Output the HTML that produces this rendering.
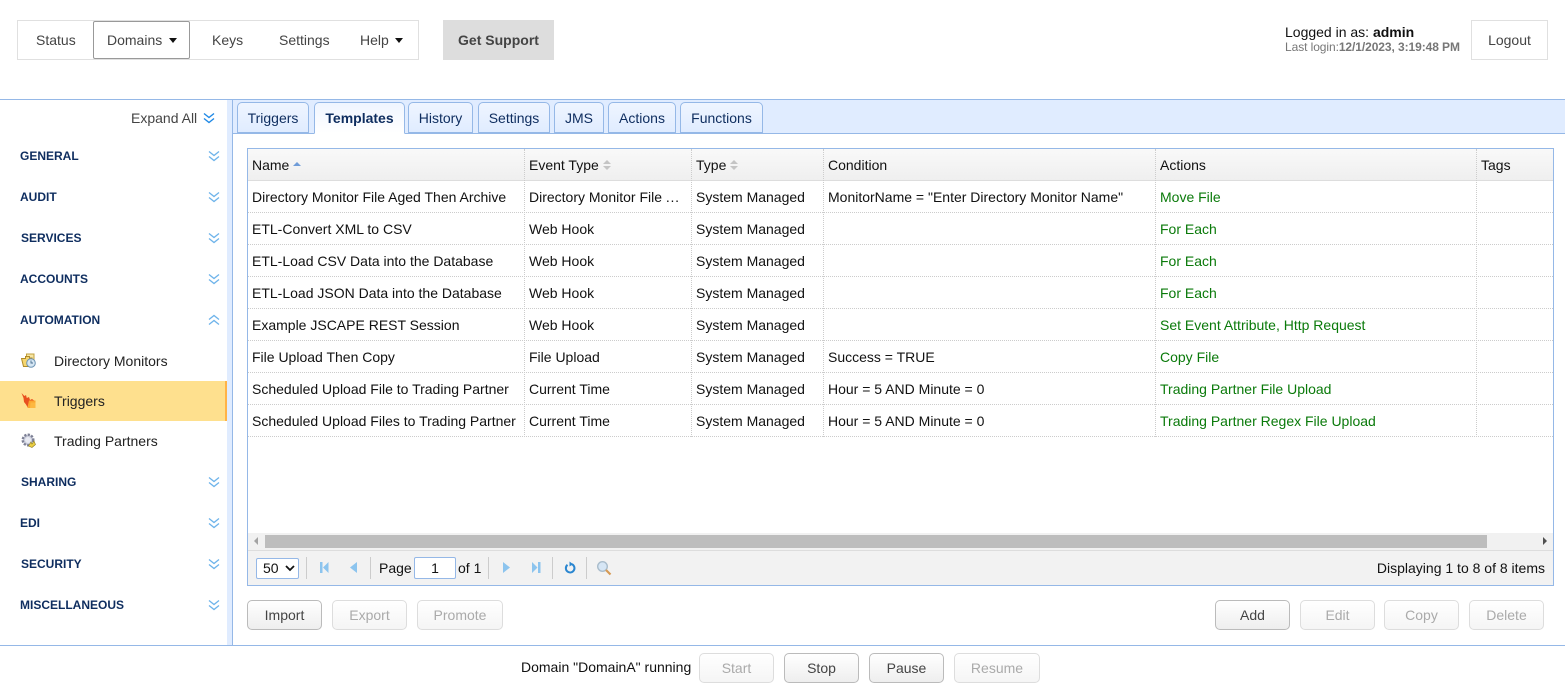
<!DOCTYPE html>
<html><head><meta charset="utf-8">
<style>
html,body{margin:0;padding:0;width:1565px;height:688px;overflow:hidden;background:#fff;font-family:"Liberation Sans",sans-serif;font-size:14px;color:#111}
.a{position:absolute;white-space:nowrap}
.t{position:absolute;white-space:nowrap;line-height:16px}
.nav{color:#444}
.tab{position:absolute;top:102px;height:31px;box-sizing:border-box;border:1px solid #95b8e7;border-bottom:1px solid #95b8e7;border-radius:5px 5px 0 0;background:linear-gradient(#eff5ff,#e0ecff);text-align:center;line-height:30px;color:#0e2d5f}
.tab.on{background:linear-gradient(#eff5ff,#fff);border-bottom:1px solid #fff;height:32px;font-weight:bold}
.sec{position:absolute;left:20px;font-size:12px;font-weight:bold;color:#0e2d5f;line-height:14px}
.chev{position:absolute;left:208px;width:12px;height:12px}
.btn{position:absolute;box-sizing:border-box;height:30px;border:1px solid #bbb;border-radius:5px;background:linear-gradient(#fff,#eee);text-align:center;line-height:29px;color:#444}
.btn.d{border-color:#ddd;color:#aaa;background:linear-gradient(#fff,#f5f5f5)}
.row{position:absolute;left:248px;width:1305px;height:32px;border-bottom:1px dotted #ccc;box-sizing:border-box}
.vs{position:absolute;width:0;border-left:1px dotted #ccc}
.g{color:#0a7a0a}
.sep{position:absolute;top:557px;height:22px;width:1px;background:#ccc}
</style></head><body>

<!-- top nav -->
<div class="a" style="left:17px;top:20px;width:402px;height:40px;box-sizing:border-box;border:1px solid #e0e0e0"></div>
<div class="a" style="left:93px;top:21px;width:97px;height:38px;box-sizing:border-box;border:1px solid #999;border-radius:2px"></div>
<div class="t nav" style="left:36px;top:32px">Status</div>
<div class="t nav" style="left:107px;top:32px">Domains</div>
<div class="a" style="left:169px;top:38px;width:0;height:0;border-left:4.5px solid transparent;border-right:4.5px solid transparent;border-top:5px solid #111"></div>
<div class="t nav" style="left:212px;top:32px">Keys</div>
<div class="t nav" style="left:279px;top:32px">Settings</div>
<div class="t nav" style="left:360px;top:32px">Help</div>
<div class="a" style="left:395px;top:38px;width:0;height:0;border-left:4.5px solid transparent;border-right:4.5px solid transparent;border-top:5px solid #111"></div>
<div class="t" style="left:443px;top:20px;width:111px;height:40px;background:#ddd;text-align:center;line-height:40px;font-weight:bold;color:#444">Get Support</div>

<div class="t" style="left:1285px;top:24px;color:#111">Logged in as: <b>admin</b></div>
<div class="t" style="left:1285px;top:39px;font-size:12px;color:#777;letter-spacing:-.08px">Last login:<b>12/1/2023, 3:19:48 PM</b></div>
<div class="a" style="left:1471px;top:20px;width:77px;height:40px;box-sizing:border-box;border:1px solid #e0e0e0;text-align:center;line-height:38px;color:#444">Logout</div>

<!-- frame lines -->
<div class="a" style="left:0;top:99px;width:1565px;height:1px;background:#95b8e7"></div>
<div class="a" style="left:227px;top:100px;width:5px;height:545px;background:#e0ecff"></div>
<div class="a" style="left:232px;top:100px;width:1px;height:545px;background:#95b8e7"></div>
<div class="a" style="left:233px;top:100px;width:1332px;height:33px;background:#e0ecff"></div>
<div class="a" style="left:233px;top:133px;width:1332px;height:1px;background:#95b8e7"></div>
<div class="a" style="left:0;top:645px;width:1565px;height:1px;background:#95b8e7"></div>

<!-- sidebar -->
<div class="t" style="left:131px;top:110px;color:#444">Expand All</div>
<svg class="a" style="left:203px;top:112px" width="12" height="12" viewBox="0 0 12 12" fill="none" stroke="#1e88e5" stroke-width="1.4"><path d="M1 1.500l5 4 5-4M1 6.500l5 4 5-4"/></svg>

<div class="sec" style="top:149px">GENERAL</div>
<div class="sec" style="top:190px">AUDIT</div>
<div class="sec" style="top:231px;left:21px">SERVICES</div>
<div class="sec" style="top:272px">ACCOUNTS</div>
<div class="sec" style="top:313px">AUTOMATION</div>
<div class="sec" style="top:475px;left:21px">SHARING</div>
<div class="sec" style="top:516px">EDI</div>
<div class="sec" style="top:557px;left:21px">SECURITY</div>
<div class="sec" style="top:598px">MISCELLANEOUS</div>

<svg class="chev" style="top:150px" viewBox="0 0 12 12" fill="none" stroke="#6db3ea" stroke-width="1.3"><path d="M1 1.500l5 4 5-4M1 6.500l5 4 5-4"/></svg>
<svg class="chev" style="top:191px" viewBox="0 0 12 12" fill="none" stroke="#6db3ea" stroke-width="1.3"><path d="M1 1.500l5 4 5-4M1 6.500l5 4 5-4"/></svg>
<svg class="chev" style="top:232px" viewBox="0 0 12 12" fill="none" stroke="#6db3ea" stroke-width="1.3"><path d="M1 1.500l5 4 5-4M1 6.500l5 4 5-4"/></svg>
<svg class="chev" style="top:273px" viewBox="0 0 12 12" fill="none" stroke="#6db3ea" stroke-width="1.3"><path d="M1 1.500l5 4 5-4M1 6.500l5 4 5-4"/></svg>
<svg class="chev" style="top:314px" viewBox="0 0 12 12" fill="none" stroke="#6db3ea" stroke-width="1.3"><path d="M1 5.500l5-4 5 4M1 10.500l5-4 5 4"/></svg>
<svg class="chev" style="top:476px" viewBox="0 0 12 12" fill="none" stroke="#6db3ea" stroke-width="1.3"><path d="M1 1.500l5 4 5-4M1 6.500l5 4 5-4"/></svg>
<svg class="chev" style="top:517px" viewBox="0 0 12 12" fill="none" stroke="#6db3ea" stroke-width="1.3"><path d="M1 1.500l5 4 5-4M1 6.500l5 4 5-4"/></svg>
<svg class="chev" style="top:558px" viewBox="0 0 12 12" fill="none" stroke="#6db3ea" stroke-width="1.3"><path d="M1 1.500l5 4 5-4M1 6.500l5 4 5-4"/></svg>
<svg class="chev" style="top:599px" viewBox="0 0 12 12" fill="none" stroke="#6db3ea" stroke-width="1.3"><path d="M1 1.500l5 4 5-4M1 6.500l5 4 5-4"/></svg>

<div class="a" style="left:0;top:381px;width:225px;height:40px;background:#fee08e"></div>
<div class="a" style="left:225px;top:381px;width:2px;height:40px;background:#ffb347"></div>
<div class="t" style="left:54px;top:353px;color:#222">Directory Monitors</div>
<div class="t" style="left:54px;top:393px;color:#222">Triggers</div>
<div class="t" style="left:54px;top:433px;color:#222">Trading Partners</div>

<svg class="a" style="left:21px;top:353px" width="15" height="15" viewBox="0 0 15 15"><path d="M5.500 3.500V1h7.500v9h-7z" fill="#f7e6a4" stroke="#c2a040" stroke-width="1"/><path d="M.5 5.500h4V3.500h4v1.500h2.500L10 13.500H2.500z" fill="#f5d670" stroke="#b08a28" stroke-width="1"/><circle cx="10" cy="10" r="4.300" fill="#d5e6f3" stroke="#6c93b3" stroke-width="1"/><path d="M10 7.500V10h2" stroke="#4a6f90" stroke-width=".9" fill="none"/></svg>
<svg class="a" style="left:21px;top:393px" width="15" height="15" viewBox="0 0 15 15"><path d="M.5 0l3 3 1.500-1 .8 3L8 4l1 3 2-1 3.500 2.500V15H7L5 11.500 3 9 2.500 5z" fill="#e8501f"/><path d="M8 7.500l6.500 0V15H6.500l.5-3z" fill="#fba62f"/><path d="M9.500 9.500h5V15H9z" fill="#fdb840"/></svg>
<svg class="a" style="left:21px;top:433px" width="15" height="15" viewBox="0 0 15 15"><circle cx="7" cy="7" r="5.300" fill="#c9ccda" stroke="#7d8095" stroke-width="2.400" stroke-dasharray="2.200 1.300"/><circle cx="7" cy="7" r="3" fill="#e9ebf3"/><path d="M7.500 13l2.500-4 1 2 2-3 1.500 3.500-3.500 3z" fill="#ecd045" stroke="#8c7a20" stroke-width=".6"/></svg>

<!-- tabs -->
<div class="tab" style="left:237px;width:72px">Triggers</div>
<div class="tab on" style="left:314px;width:91px">Templates</div>
<div class="tab" style="left:408px;width:65px">History</div>
<div class="tab" style="left:478px;width:72px">Settings</div>
<div class="tab" style="left:554px;width:50px">JMS</div>
<div class="tab" style="left:608px;width:68px">Actions</div>
<div class="tab" style="left:680px;width:83px">Functions</div>

<!-- grid -->
<div class="a" style="left:247px;top:148px;width:1307px;height:438px;box-sizing:border-box;border:1px solid #95b8e7"></div>
<div class="a" style="left:248px;top:149px;width:1305px;height:32px;box-sizing:border-box;background:linear-gradient(#f9f9f9,#efefef);border-bottom:1px solid #ddd"></div>

<div class="vs" style="left:524px;top:149px;height:288px"></div>
<div class="vs" style="left:691px;top:149px;height:288px"></div>
<div class="vs" style="left:823px;top:149px;height:288px"></div>
<div class="vs" style="left:1155px;top:149px;height:288px"></div>
<div class="vs" style="left:1476px;top:149px;height:288px"></div>

<div class="t" style="left:252px;top:157px">Name</div>
<div class="a" style="left:293px;top:162px;width:0;height:0;border:4.500px solid transparent;border-bottom:4.500px solid #6f9cd8;border-top:0"></div>
<div class="t" style="left:529px;top:157px">Event Type</div>
<div class="a" style="left:603px;top:160px;width:0;height:0;border:4.500px solid transparent;border-bottom:4.500px solid #c4c4c4;border-top:0"></div>
<div class="a" style="left:603px;top:166px;width:0;height:0;border:4.500px solid transparent;border-top:4.500px solid #c4c4c4;border-bottom:0"></div>
<div class="t" style="left:696px;top:157px">Type</div>
<div class="a" style="left:730px;top:160px;width:0;height:0;border:4.500px solid transparent;border-bottom:4.500px solid #c4c4c4;border-top:0"></div>
<div class="a" style="left:730px;top:166px;width:0;height:0;border:4.500px solid transparent;border-top:4.500px solid #c4c4c4;border-bottom:0"></div>
<div class="t" style="left:828px;top:157px">Condition</div>
<div class="t" style="left:1160px;top:157px">Actions</div>
<div class="t" style="left:1481px;top:157px">Tags</div>

<div class="row" style="top:181px"></div>
<div class="row" style="top:213px"></div>
<div class="row" style="top:245px"></div>
<div class="row" style="top:277px"></div>
<div class="row" style="top:309px"></div>
<div class="row" style="top:341px"></div>
<div class="row" style="top:373px"></div>
<div class="row" style="top:405px"></div>

<div class="t" style="left:252px;top:189px">Directory Monitor File Aged Then Archive</div>
<div class="t" style="left:529px;top:189px">Directory Monitor File <span style="letter-spacing:.7px">...</span></div>
<div class="t" style="left:696px;top:189px">System Managed</div>
<div class="t" style="left:828px;top:189px">MonitorName = "Enter Directory Monitor Name"</div>
<div class="t g" style="left:1160px;top:189px">Move File</div>

<div class="t" style="left:252px;top:221px">ETL-Convert XML to CSV</div>
<div class="t" style="left:529px;top:221px">Web Hook</div>
<div class="t" style="left:696px;top:221px">System Managed</div>
<div class="t g" style="left:1160px;top:221px">For Each</div>

<div class="t" style="left:252px;top:253px">ETL-Load CSV Data into the Database</div>
<div class="t" style="left:529px;top:253px">Web Hook</div>
<div class="t" style="left:696px;top:253px">System Managed</div>
<div class="t g" style="left:1160px;top:253px">For Each</div>

<div class="t" style="left:252px;top:285px">ETL-Load JSON Data into the Database</div>
<div class="t" style="left:529px;top:285px">Web Hook</div>
<div class="t" style="left:696px;top:285px">System Managed</div>
<div class="t g" style="left:1160px;top:285px">For Each</div>

<div class="t" style="left:252px;top:317px">Example JSCAPE REST Session</div>
<div class="t" style="left:529px;top:317px">Web Hook</div>
<div class="t" style="left:696px;top:317px">System Managed</div>
<div class="t g" style="left:1160px;top:317px">Set Event Attribute, Http Request</div>

<div class="t" style="left:252px;top:349px">File Upload Then Copy</div>
<div class="t" style="left:529px;top:349px">File Upload</div>
<div class="t" style="left:696px;top:349px">System Managed</div>
<div class="t" style="left:828px;top:349px">Success = TRUE</div>
<div class="t g" style="left:1160px;top:349px">Copy File</div>

<div class="t" style="left:252px;top:381px">Scheduled Upload File to Trading Partner</div>
<div class="t" style="left:529px;top:381px">Current Time</div>
<div class="t" style="left:696px;top:381px">System Managed</div>
<div class="t" style="left:828px;top:381px">Hour = 5 AND Minute = 0</div>
<div class="t g" style="left:1160px;top:381px">Trading Partner File Upload</div>

<div class="t" style="left:252px;top:413px">Scheduled Upload Files to Trading Partner</div>
<div class="t" style="left:529px;top:413px">Current Time</div>
<div class="t" style="left:696px;top:413px">System Managed</div>
<div class="t" style="left:828px;top:413px">Hour = 5 AND Minute = 0</div>
<div class="t g" style="left:1160px;top:413px">Trading Partner Regex File Upload</div>

<!-- scrollbar -->
<div class="a" style="left:248px;top:533px;width:1305px;height:17px;background:#f1f1f1"></div>
<div class="a" style="left:265px;top:535px;width:1222px;height:13px;background:#bdbdbd"></div>
<div class="a" style="left:254px;top:537px;width:0;height:0;border:4.500px solid transparent;border-right:4.500px solid #a3a3a3;border-left:0"></div>
<div class="a" style="left:1543px;top:537px;width:0;height:0;border:4.500px solid transparent;border-left:4.500px solid #505050;border-right:0"></div>

<!-- pager -->
<div class="a" style="left:248px;top:550px;width:1305px;height:35px;box-sizing:border-box;background:#f2f2f2;border-top:1px solid #ddd"></div>
<div class="a" style="left:256px;top:558px;width:43px;height:21px;box-sizing:border-box;border:1px solid #95b8e7;border-radius:2px;background:#fff;line-height:19px;padding-left:6px;color:#111">50</div>
<svg class="a" style="left:285px;top:565px" width="10" height="7" viewBox="0 0 10 7" fill="none" stroke="#111" stroke-width="1.800"><path d="M1 1l4 4 4-4"/></svg>
<div class="sep" style="left:306px"></div>
<div class="sep" style="left:370px"></div>
<div class="sep" style="left:488px"></div>
<div class="sep" style="left:552px"></div>
<div class="sep" style="left:586px"></div>
<svg class="a" style="left:320px;top:562px" width="9" height="11" viewBox="0 0 9 11" fill="#8cc4ee"><path d="M0 0h2.500v11H0zM8.500 0v11L3 5.500z"/></svg>
<svg class="a" style="left:350px;top:562px" width="8" height="11" viewBox="0 0 8 11" fill="#8cc4ee"><path d="M7 0v11L0 5.500z"/></svg>
<div class="t" style="left:379px;top:560px">Page</div>
<div class="a" style="left:414px;top:557px;width:42px;height:22px;box-sizing:border-box;border:1px solid #95b8e7;border-radius:2px;background:#fff;text-align:center;line-height:20px">1</div>
<div class="t" style="left:458px;top:560px">of 1</div>
<svg class="a" style="left:503px;top:562px" width="8" height="11" viewBox="0 0 8 11" fill="#8cc4ee"><path d="M0 0v11L7 5.500z"/></svg>
<svg class="a" style="left:532px;top:562px" width="9" height="11" viewBox="0 0 9 11" fill="#8cc4ee"><path d="M0 0v11l5.500-5.500zM6 0h2.500v11H6z"/></svg>
<svg class="a" style="left:564px;top:561px" width="13" height="14" viewBox="0 0 13 14" fill="none"><path d="M7.800 3.200A4.300 4.300 0 1 1 3.500 3.800" stroke="#2a86d0" stroke-width="2"/><path d="M5.500.5l3.500 2.600L5.500 5.500z" fill="#2a86d0"/></svg>
<svg class="a" style="left:596px;top:560px" width="16" height="16" viewBox="0 0 16 16" fill="none"><circle cx="6.500" cy="6.500" r="4.800" fill="#d6e6f5" stroke="#a9bccb" stroke-width="1.400"/><path d="M10 10l4.500 4.500" stroke="#d69a55" stroke-width="2.200"/></svg>
<div class="t" style="right:20px;top:560px;color:#111">Displaying 1 to 8 of 8 items</div>

<!-- action buttons -->
<div class="btn" style="left:247px;top:600px;width:75px">Import</div>
<div class="btn d" style="left:332px;top:600px;width:75px">Export</div>
<div class="btn d" style="left:417px;top:600px;width:86px">Promote</div>
<div class="btn" style="left:1215px;top:600px;width:75px">Add</div>
<div class="btn d" style="left:1300px;top:600px;width:75px">Edit</div>
<div class="btn d" style="left:1384px;top:600px;width:75px">Copy</div>
<div class="btn d" style="left:1469px;top:600px;width:75px">Delete</div>

<!-- footer -->
<div class="t" style="left:521px;top:659px;color:#111">Domain "DomainA" running</div>
<div class="btn d" style="left:699px;top:653px;width:75px">Start</div>
<div class="btn" style="left:784px;top:653px;width:75px">Stop</div>
<div class="btn" style="left:869px;top:653px;width:75px">Pause</div>
<div class="btn d" style="left:954px;top:653px;width:86px">Resume</div>
</body></html>
